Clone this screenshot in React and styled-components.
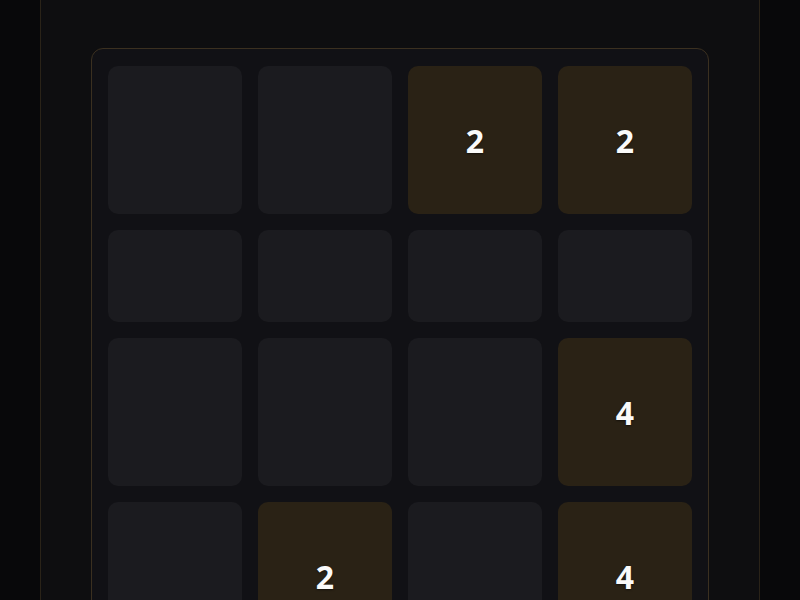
import React from 'react';
import styled, { createGlobalStyle } from 'styled-components';

const GlobalStyle = createGlobalStyle`
  html, body {
    margin: 0;
    padding: 0;
    background: #08080a;
    overflow: hidden;
  }
  body {
    font-family: "Open Sans", "Noto Sans", sans-serif;
  }
`;

const Page = styled('div')`
  height: 600px;
  display: flex;
  justify-content: center;
  background: #08080a;
`;

const Panel = styled('div')`
  width: 718px;
  background: #0e0e10;
  border-left: 1px solid #2a2318;
  border-right: 1px solid #2a2318;
  padding-top: 48px;
  display: flex;
  justify-content: center;
  align-items: flex-start;
`;

const Board = styled('div')`
  width: 584px;
  padding: 17px 16px 16px;
  background: #111115;
  border: 1px solid #3b3020;
  border-radius: 12px;
  display: grid;
  grid-template-columns: repeat(4, 134px);
  gap: 16px;
`;

const Tile = styled('div')`
  padding: 47px 0 45px;
  border-radius: 10px;
  background: ${props => (props.value ? '#2a2215' : '#1b1b1f')};
  color: #fafafa;
  font-size: 32px;
  font-weight: 700;
  line-height: 56px;
  text-align: center;
  text-shadow: 0 1px 2px rgba(0, 0, 0, 0.5);
`;

const grid = [
  [0, 0, 2, 2],
  [0, 0, 0, 0],
  [0, 0, 0, 4],
  [0, 2, 0, 4],
];

const App = () => (
  <>
    <GlobalStyle />
    <Page>
      <Panel>
        <Board>
          {grid.flat().map((value, index) => (
            <Tile key={index} value={value}>
              {value || ''}
            </Tile>
          ))}
        </Board>
      </Panel>
    </Page>
  </>
);

export default App;
